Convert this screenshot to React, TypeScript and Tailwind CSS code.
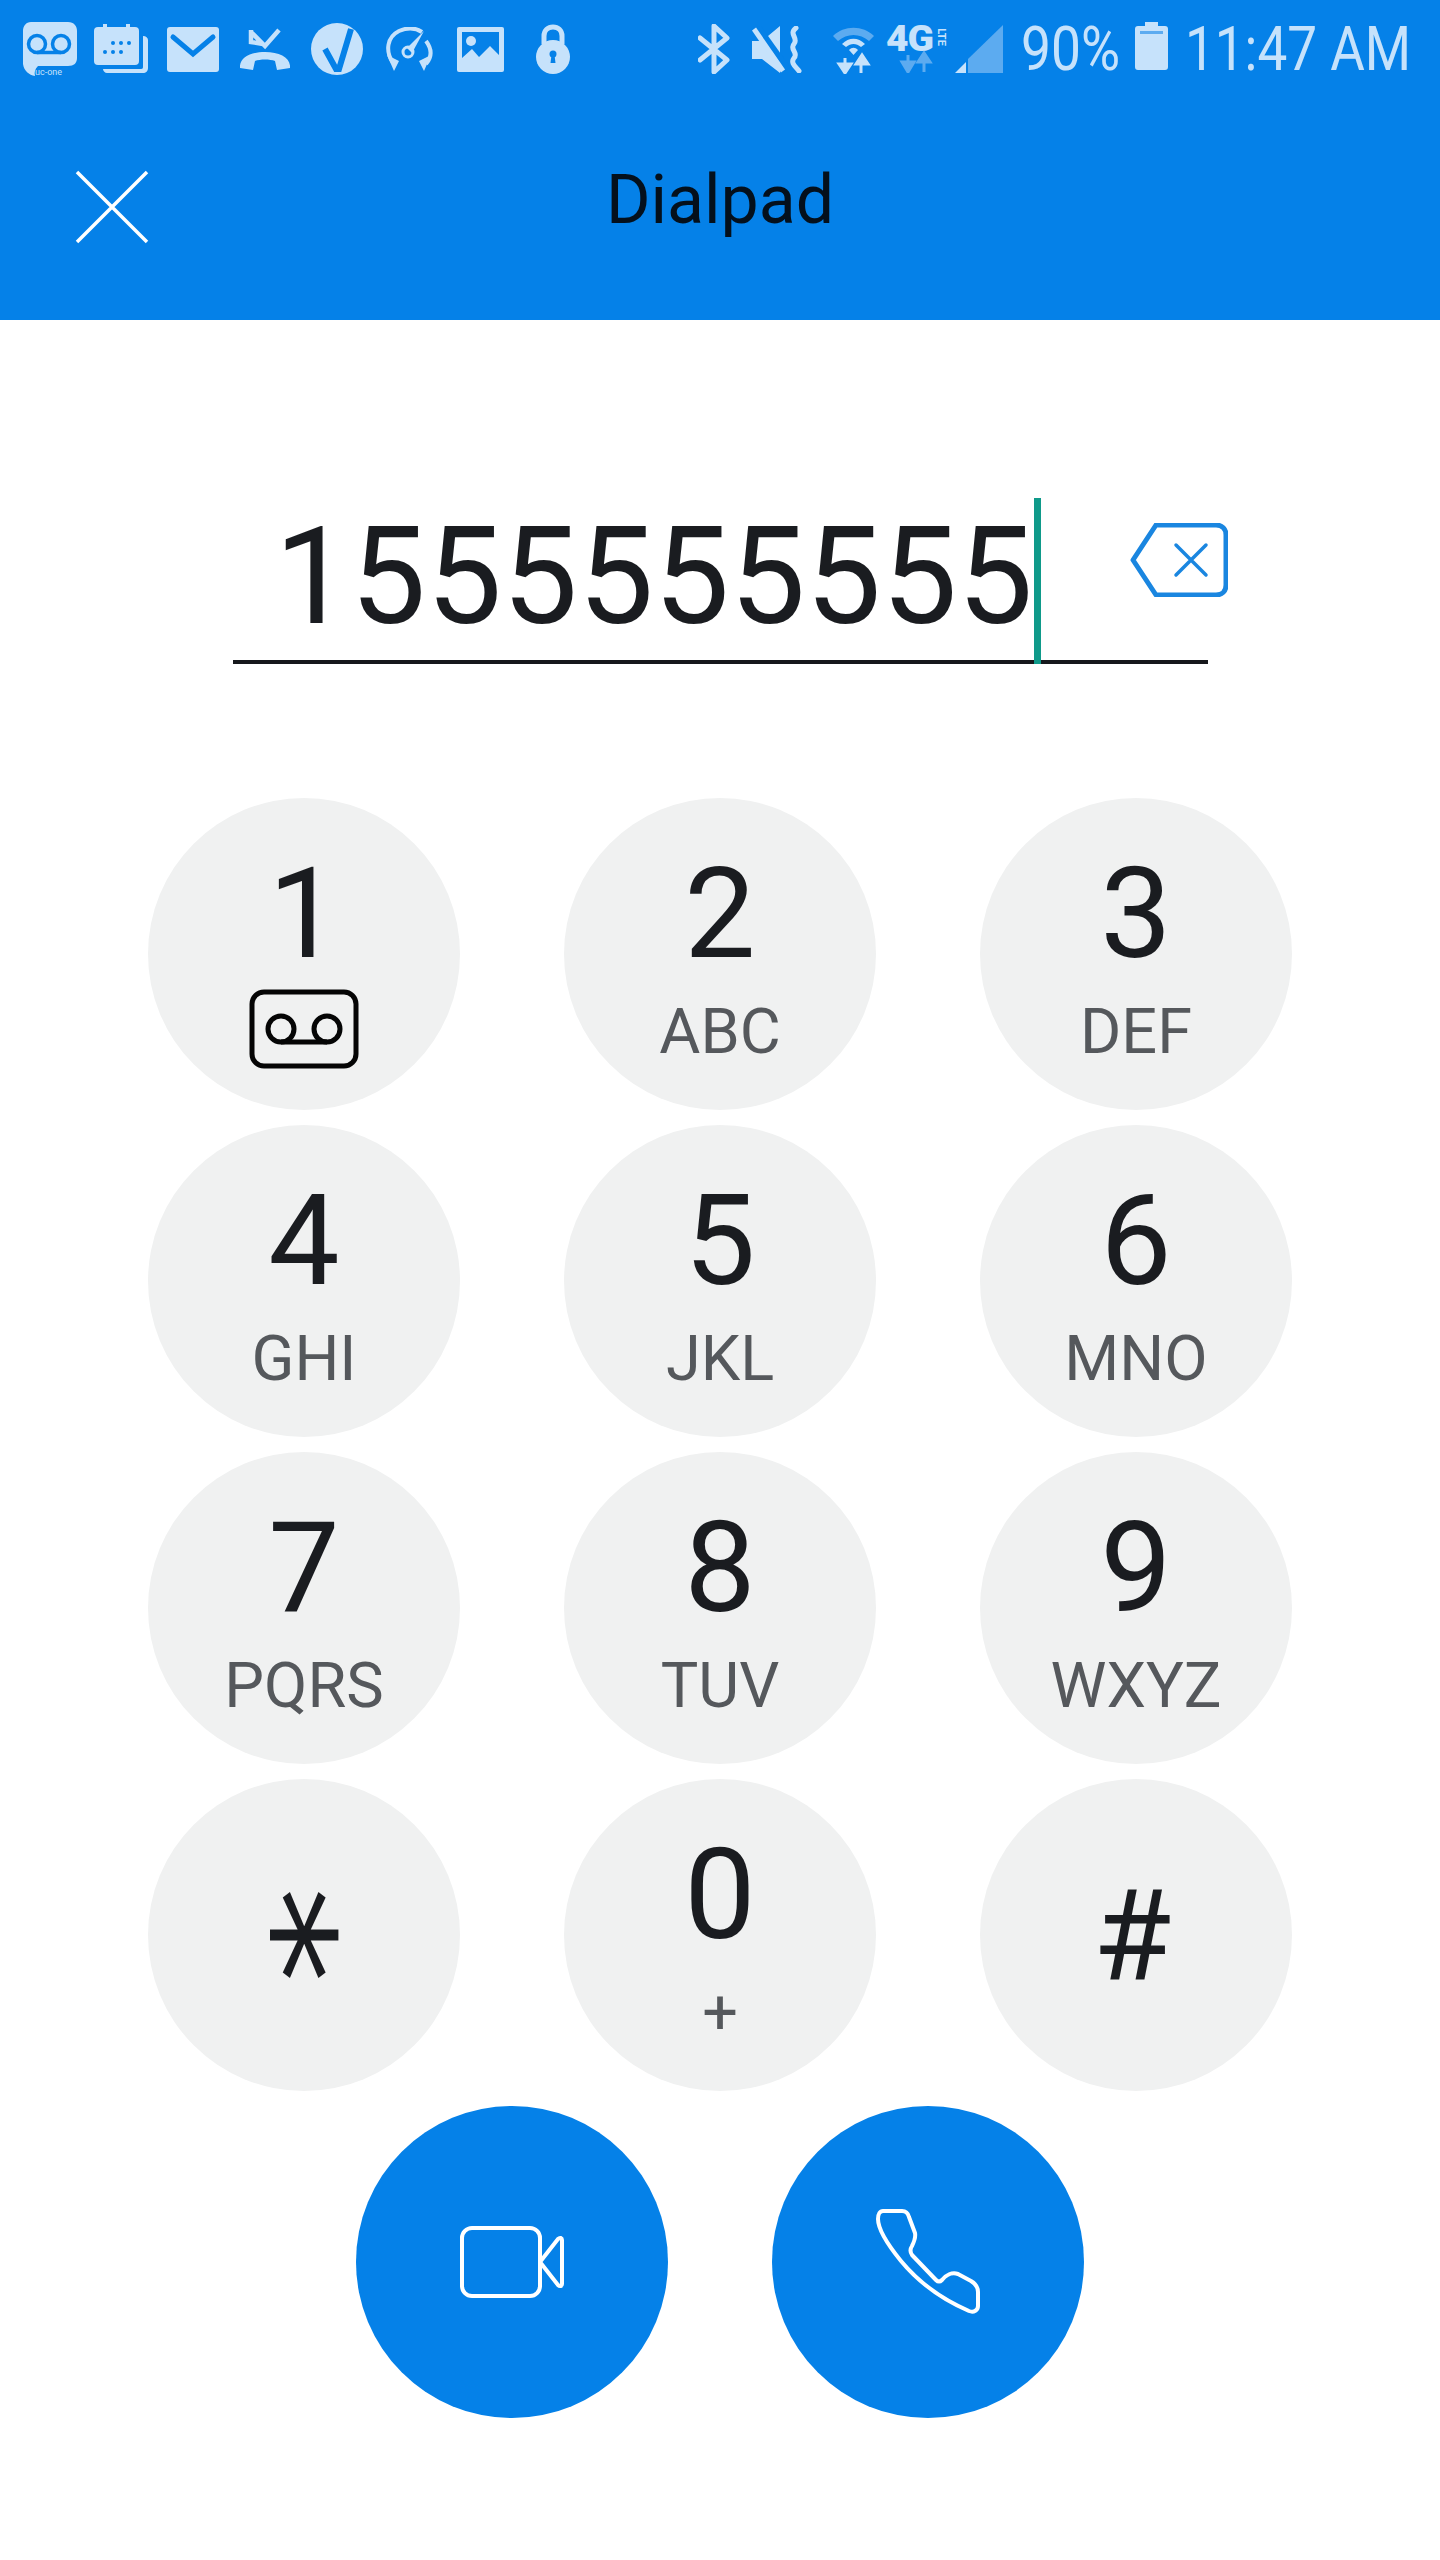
import React from "react";

const L = "#c6e2fb";
const D = "#5cabf0";
const B = "#0581e8";

function Uc() {
  return (
    <svg width="56" height="54" viewBox="0 0 56 54" className="ml-[22px] shrink-0">
      <path d="M9 0H46C52 0 55 4 55 9V36C55 41 52 44 46 44H16C13 47 12 50 13 54C7 53 2 49 1 42V9C1 4 4 0 9 0Z" fill={L} />
      <circle cx="15" cy="22" r="8.5" fill="none" stroke={B} strokeWidth="3.5" />
      <circle cx="39" cy="22" r="8.5" fill="none" stroke={B} strokeWidth="3.5" />
      <path d="M15 30.5H39" stroke={B} strokeWidth="3.5" />
      <text x="13" y="53" fontFamily="Roboto, sans-serif" fontSize="9" fill={L}>uc-one</text>
    </svg>
  );
}
function Cal() {
  return (
    <svg width="54" height="50" viewBox="0 0 54 50" className="ml-[16px] shrink-0">
      <rect x="0" y="3" width="45" height="38" rx="4" fill={L} />
      <rect x="9" y="0" width="4" height="6" fill={L} />
      <rect x="32" y="0" width="4" height="6" fill={L} />
      <path d="M49 12C52 12 54 14 54 16V44C54 47 52 49 49 49H13C11 49 9 47 9 45H47C49 45 49 44 49 42Z" fill={L} />
      <g fill={B}>
        <circle cx="19" cy="19" r="2" /><circle cx="27" cy="19" r="2" /><circle cx="35" cy="19" r="2" />
        <circle cx="11" cy="28" r="2" /><circle cx="19" cy="28" r="2" /><circle cx="27" cy="28" r="2" />
      </g>
    </svg>
  );
}
function Mail() {
  return (
    <svg width="52" height="45" viewBox="0 0 52 45" className="ml-[19px] shrink-0">
      <rect width="52" height="45" rx="3" fill={L} />
      <path d="M6 10L26 27L46 10" fill="none" stroke={B} strokeWidth="5" strokeLinecap="round" />
    </svg>
  );
}
function Missed() {
  return (
    <svg width="50" height="42" viewBox="0 0 50 42" className="ml-[21px] shrink-0">
      <path d="M11 2V14L23 16M11 4L25 18L39 2" fill="none" stroke={L} strokeWidth="4.5" />
      <path d="M0 40C-1 30 10 24 25 24C40 24 51 30 50 40L37 42L35 33C30 31 20 31 15 33L13 42Z" fill={L} />
    </svg>
  );
}
function Vee() {
  return (
    <svg width="52" height="52" viewBox="0 0 52 52" className="ml-[21px] shrink-0">
      <circle cx="26" cy="26" r="26" fill={L} />
      <path d="M14 26L25 46H28L40 6" fill="none" stroke={B} strokeWidth="6" />
    </svg>
  );
}
function Gauge() {
  return (
    <svg width="50" height="44" viewBox="0 0 50 44" className="ml-[21px] shrink-0">
      <path d="M9 36C1 24 3 10 15 4C24 0 32 1 38 5M42 14C48 22 48 30 42 37" fill="none" stroke={L} strokeWidth="4" />
      <path d="M3 28L10 44L15 34ZM47 28L40 44L35 34Z" fill={L} />
      <path d="M23 21L40 4L28 26Z" fill={L} />
      <circle cx="24" cy="25" r="5" fill="none" stroke={L} strokeWidth="3" />
    </svg>
  );
}
function Pic() {
  return (
    <svg width="47" height="45" viewBox="0 0 47 45" className="ml-[23px] shrink-0">
      <rect width="47" height="45" rx="2" fill={L} />
      <rect x="5" y="5" width="37" height="35" fill={B} />
      <circle cx="14" cy="14" r="5" fill={L} />
      <path d="M5 31L15 22L22 30L33 19L42 28V40H5Z" fill={L} />
    </svg>
  );
}
function Lock() {
  return (
    <svg width="34" height="50" viewBox="0 0 34 50" className="ml-[32px] shrink-0">
      <path d="M8 20V12C8 6 12 3 17 3C22 3 26 6 26 12V20" fill="none" stroke={L} strokeWidth="5" />
      <circle cx="17" cy="33" r="17" fill={L} />
      <circle cx="17" cy="30" r="3.5" fill={B} />
      <path d="M15.5 31H18.5L19.5 39H14.5Z" fill={B} />
    </svg>
  );
}
function Bt() {
  return (
    <svg width="32" height="50" viewBox="0 0 32 50" className="ml-[128px] shrink-0">
      <path d="M2 14L29 36L16 48V2L29 14L2 36" fill="none" stroke={L} strokeWidth="5" strokeLinejoin="round" strokeLinecap="round" />
    </svg>
  );
}
function Mute() {
  return (
    <svg width="50" height="47" viewBox="0 0 50 47" className="ml-[22px] shrink-0">
      <path d="M0 15H10L28 0V47L10 33H0Z" fill={L} />
      <path d="M6 1L36 43" stroke={B} strokeWidth="6" />
      <path d="M2 3L31 45" stroke={L} strokeWidth="5" />
      <path d="M44 2C36 8 47 12 42 18C37 23 47 27 42 32C38 37 44 41 47 45" fill="none" stroke={L} strokeWidth="5" strokeLinecap="round" />
    </svg>
  );
}
function Wifi() {
  return (
    <svg width="43" height="49" viewBox="0 0 43 49" className="ml-[30px] shrink-0">
      <path d="M1 11C12 0 31 0 42 11L37 16C28 8 15 8 6 16Z" fill={D} />
      <path d="M10 19C17 12 26 12 33 19L29 22C24 18 19 18 14 22Z" fill={L} />
      <path d="M17 25C20 22 23 22 26 25L21.5 30Z" fill={L} />
      <path d="M13 33V45M7 39L13 48L19 39ZM29 48V36M24 39L30 30L36 39Z" fill={L} stroke={L} strokeWidth="3" />
    </svg>
  );
}
function Lte() {
  return (
    <div className="relative ml-[11px] h-[47px] w-[62px] shrink-0">
      <span className="absolute left-0 top-[-7px] origin-left scale-x-[1.08] font-['Roboto',sans-serif] text-[36px] leading-[40px] font-black tracking-[-1px] text-[#c6e2fb]">4G</span>
      <span className="absolute left-[46px] top-[5px] rotate-90 font-['Roboto',sans-serif] text-[11px] leading-[12px] font-bold text-[#c6e2fb]">LTE</span>
      <svg width="62" height="47" viewBox="0 0 62 47" className="absolute inset-0">
        <path d="M22 29V43M16 36L22 46L28 36ZM38 46V33M32 36L38 27L44 36Z" fill={D} stroke={D} strokeWidth="3" />
      </svg>
    </div>
  );
}
function Signal() {
  return (
    <svg width="48" height="48" viewBox="0 0 48 48" className="ml-[7px] shrink-0">
      <path d="M48 0V48H13V34Z" fill={D} />
      <path d="M0 48L11 37V48Z" fill={L} />
    </svg>
  );
}
function Batt() {
  return (
    <svg width="33" height="48" viewBox="0 0 33 48" className="ml-[16px] shrink-0">
      <path d="M10 0H23V4H30C32 4 33 5 33 7V45C33 47 32 48 30 48H3C1 48 0 47 0 45V7C0 5 1 4 3 4H10Z" fill={L} />
      <rect x="5" y="9" width="23" height="3" fill={D} />
    </svg>
  );
}

function StatusBar() {
  return (
    <div className="flex h-[96px] items-start pt-[22px]">
      <div className="flex items-center">
        <Uc /><Cal /><Mail /><Missed /><Vee /><Gauge /><Pic /><Lock /><Bt /><Mute /><Wifi /><Lte /><Signal />
      </div>
      <span className="ml-[18px] w-[98px] origin-left scale-x-[0.86] whitespace-nowrap font-['Roboto',sans-serif] text-[62px] leading-[54px] text-[#c6e2fb]">90%</span>
      <Batt />
      <span className="ml-[17px] w-[224px] origin-left scale-x-[0.855] whitespace-nowrap font-['Roboto',sans-serif] text-[62px] leading-[54px] text-[#c6e2fb]">11:47 AM</span>
    </div>
  );
}

function Voicemail() {
  return (
    <svg width="110" height="80" viewBox="0 0 110 80" className="mt-[12px]">
      <rect x="3" y="3" width="104" height="74" rx="12" fill="none" stroke="#050505" strokeWidth="5" />
      <circle cx="32" cy="40" r="13" fill="none" stroke="#050505" strokeWidth="5" />
      <circle cx="78" cy="40" r="13" fill="none" stroke="#050505" strokeWidth="5" />
      <path d="M32 53H78" stroke="#050505" strokeWidth="5" />
    </svg>
  );
}

function Key({ d, s }: { d: string; s: string }) {
  return (
    <div className="flex h-[312px] w-[312px] flex-col items-center rounded-full bg-[#f0f1f1] pt-[52px] font-['Roboto',sans-serif]">
      <span className="text-[127px] leading-[127px] text-[#1a1c20]">{d}</span>
      <span className="mt-[25px] text-[63px] leading-[60px] text-[#55585c]">{s}</span>
    </div>
  );
}

function SymbolKey({ children }: { children: React.ReactNode }) {
  return <div className="flex h-[312px] w-[312px] items-center justify-center rounded-full bg-[#f0f1f1]">{children}</div>;
}

export default function App() {
  return (
    <div className="flex min-h-[2560px] flex-col bg-white">
      <header className="h-[320px] bg-[#0581e8]">
        <StatusBar />
        <div className="relative flex h-[204px] items-center justify-center pt-[4px]">
          <svg width="74" height="74" viewBox="0 0 74 74" className="absolute left-[75px] top-[74px]">
            <path d="M2 2L72 72M72 2L2 72" stroke="#fff" strokeWidth="3.5" />
          </svg>
          <h1 className="font-['Roboto',sans-serif] text-[68px] leading-none font-normal text-[#04101c]">Dialpad</h1>
        </div>
      </header>

      <div className="relative mx-auto mt-[182px] h-[162px] w-[975px] border-b-[4px] border-[#16181c]">
        <div className="absolute bottom-[-4px] left-[801px] h-[166px] w-[7px] bg-[#0f9a8a]" />
        <span className="absolute left-[42px] top-[8px] font-['Roboto',sans-serif] text-[135px] leading-[134px] text-[#1a1c20]">1555555555</span>
        <svg width="98" height="74" viewBox="0 0 98 74" className="absolute left-[897px] top-[21px]">
          <path d="M26 2H86C92 2 96 6 96 12V62C96 68 92 72 86 72H26L3 37Z" fill="none" stroke="#1a86e0" strokeWidth="5" strokeLinejoin="round" />
          <path d="M46 22L76 52M76 22L46 52" stroke="#1a86e0" strokeWidth="3.5" strokeLinecap="round" />
        </svg>
      </div>

      <div className="mx-auto mt-[134px] grid w-[1144px] grid-cols-3 gap-x-[104px] gap-y-[15px]">
        <div className="flex h-[312px] w-[312px] flex-col items-center rounded-full bg-[#f0f1f1] pt-[52px] font-['Roboto',sans-serif]">
          <span className="text-[127px] leading-[127px] text-[#1a1c20]">1</span>
          <Voicemail />
        </div>
        <Key d="2" s="ABC" />
        <Key d="3" s="DEF" />
        <Key d="4" s="GHI" />
        <Key d="5" s="JKL" />
        <Key d="6" s="MNO" />
        <Key d="7" s="PQRS" />
        <Key d="8" s="TUV" />
        <Key d="9" s="WXYZ" />
        <SymbolKey>
          <span className="-translate-x-[26px] scale-x-[1.3] rotate-90 font-['DejaVu_Sans',sans-serif] text-[150px] leading-none text-[#1a1c20]">*</span>
        </SymbolKey>
        <Key d="0" s="+" />
        <SymbolKey>
          <span className="mr-[8px] font-['Roboto',sans-serif] text-[127px] leading-none text-[#1a1c20]">#</span>
        </SymbolKey>
      </div>

      <div className="mt-[15px] flex justify-center gap-x-[104px]">
        <button className="flex h-[312px] w-[312px] items-center justify-center rounded-full bg-[#0581e8]">
          <svg width="104" height="72" viewBox="0 0 104 72">
            <rect x="2" y="2" width="78" height="68" rx="10" fill="none" stroke="#fff" strokeWidth="4" />
            <path d="M80 36L98 13C100 11 102 12 102 14V58C102 60 100 61 98 59Z" fill="none" stroke="#fff" strokeWidth="4" strokeLinejoin="round" />
          </svg>
        </button>
        <button className="flex h-[312px] w-[312px] items-center justify-center rounded-full bg-[#0581e8]">
          <svg width="104" height="106" viewBox="0 0 104 106">
            <path d="M7 2L26 2C30 2 32 4 33 8L39 24C40 29 38 33 36 37C34 40 34 43 36 46L60 71C62 73 64 73 66 71C70 66 76 63 82 65L95 72C100 75 102 78 102 83L102 97C102 101 98 104 93 102C70 92 44 75 25 52C12 36 2 20 2 10C2 5 4 2 7 2Z" fill="none" stroke="#fff" strokeWidth="4" strokeLinejoin="round" />
          </svg>
        </button>
      </div>
    </div>
  );
}
